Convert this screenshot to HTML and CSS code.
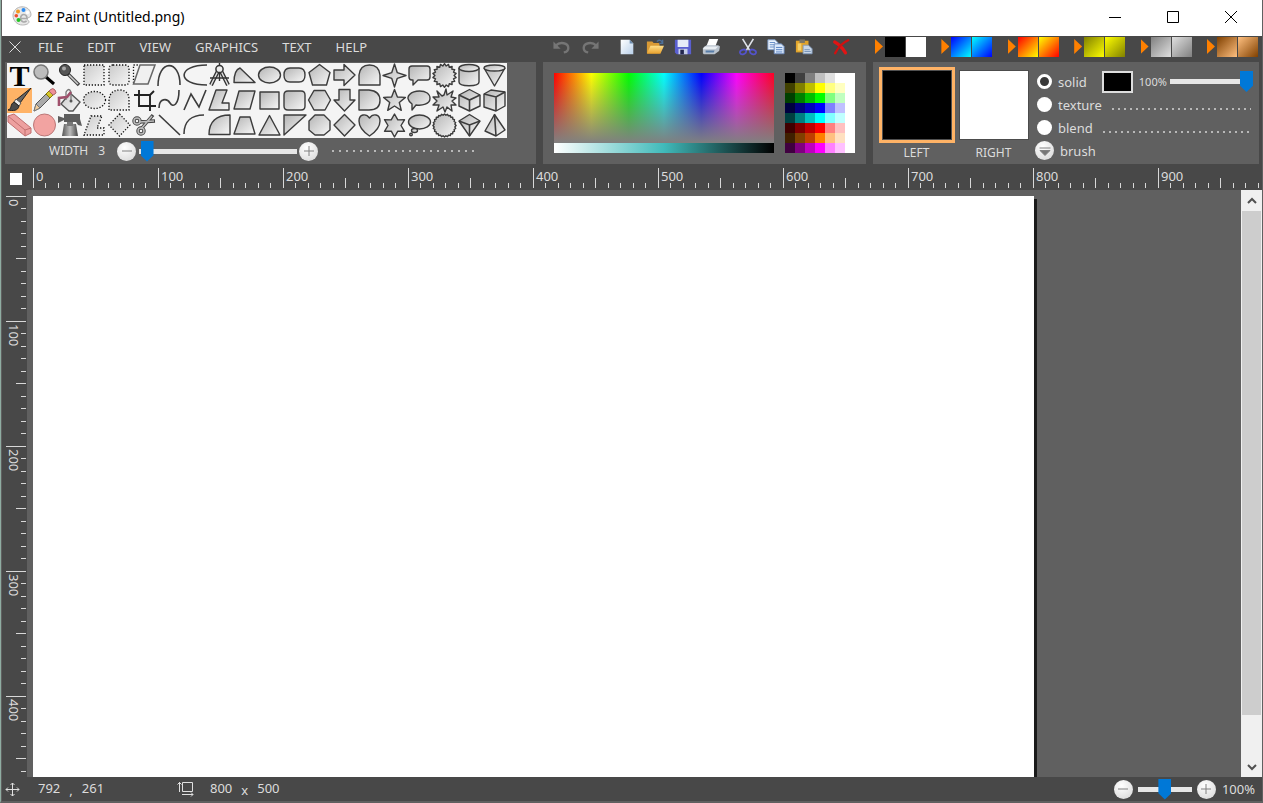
FILE: index.html
```html
<!DOCTYPE html>
<html lang="en">
<head>
<meta charset="utf-8">
<title>EZ Paint (Untitled.png)</title>
<link rel="stylesheet" href="styles.css">
</head>
<body>
<svg class="defs" aria-hidden="true">
  <defs>
    <linearGradient id="shade" x1="0" y1="0" x2="1" y2="1"><stop offset="0" stop-color="#b4b4b4"/><stop offset="1" stop-color="#f8f8f8"/></linearGradient>
    <linearGradient id="pale" x1="0" y1="0" x2="1" y2="1"><stop offset="0" stop-color="#cacaca"/><stop offset="1" stop-color="#f6f6f6"/></linearGradient>
    <linearGradient id="metal" x1="0" y1="0" x2="1" y2="0"><stop offset="0" stop-color="#555"/><stop offset=".5" stop-color="#bbb"/><stop offset="1" stop-color="#444"/></linearGradient>
    <linearGradient id="paper" x1="0" y1="0" x2="1" y2="1"><stop offset="0" stop-color="#fff"/><stop offset="1" stop-color="#b9d0ea"/></linearGradient>
    <linearGradient id="gold" x1="0" y1="0" x2="0" y2="1"><stop offset="0" stop-color="#ffe08a"/><stop offset="1" stop-color="#e8a02c"/></linearGradient>
  </defs>
</svg>
<div class="window">
  <header class="titlebar">
    <svg class="logo" viewBox="0 0 20 20" aria-hidden="true">
      <path d="M10 .8C5 .8 1 4.800 1 9.500c0 5 4 9.500 9.500 9.500 3.500 0 6.500-1.300 6.500-3.200 0-1.700-2-1.300-2-2.800 0-1.800 4-1 4-4C19 4 15 .8 10 .8z" fill="#e8e8e8" stroke="#b5b5b5"/>
      <path d="M9 12.500h6c.4-5-6.400-5.400-6.400-.4 0 3.800 3.800 4.800 6 2.800" fill="none" stroke="#aaa" stroke-width="1.600"/>
      <circle cx="6" cy="5.500" r="2" fill="#f39a1f"/><circle cx="11.500" cy="4" r="2" fill="#2d8cf0"/><circle cx="4.300" cy="9.800" r="1.800" fill="#f0502d"/><circle cx="6.500" cy="14" r="2" fill="#22c322"/><circle cx="15.500" cy="6.500" r="1.700" fill="#fff"/>
    </svg>
    <h1 class="title">EZ Paint (Untitled.png)</h1>
    <div class="caption-buttons">
      <button class="caption" aria-label="Minimize"><svg viewBox="0 0 12 12"><path d="M0 6.500h12"/></svg></button>
      <button class="caption" aria-label="Maximize"><svg viewBox="0 0 12 12"><path d="M.5 .5h11v11H.5z"/></svg></button>
      <button class="caption" aria-label="Close"><svg viewBox="0 0 12 12"><path d="M0 0l12 12M12 0L0 12"/></svg></button>
    </div>
  </header>

  <div class="top columns">
    <nav class="menu">
      <button class="menu-close" aria-label="Close picture"><svg viewBox="0 0 12 12"><path d="M.5 .5l11 11M11.500 .5l-11 11"/></svg></button>
      <button>FILE</button><button>EDIT</button><button>VIEW</button><button>GRAPHICS</button><button>TEXT</button><button>HELP</button>
    </nav>
    <div class="actions">
      <button aria-label="Undo"><svg viewBox="0 0 20 20"><path d="M3 8.500c5-5 14-3 14 2.500 0 3-2.500 4.500-5 5" fill="none" stroke="#757575" stroke-width="2.600"/><path d="M.5 4v8h8z" fill="#757575"/></svg></button>
      <button aria-label="Redo"><svg viewBox="0 0 20 20"><path d="M17 8.500c-5-5-14-3-14 2.500 0 3 2.500 4.500 5 5" fill="none" stroke="#757575" stroke-width="2.600"/><path d="M19.500 4v8h-8z" fill="#757575"/></svg></button>
      <button class="group-start" aria-label="New"><svg viewBox="0 0 20 20"><path d="M3 2h10l4 4v12H3z" fill="url(#paper)"/><path d="M13 2v4h4z" fill="#6d8db0"/></svg></button>
      <button aria-label="Open"><svg viewBox="0 0 20 20"><path d="M1 4h6l1.500 1.500H15V17H1z" fill="#d99a35"/><path d="M5 8.500h15l-4 9H1z" fill="url(#gold)"/><path d="M12 4c3-2.500 5-1.500 6 1M18.500 2v4h-4" fill="none" stroke="#4d6f99" stroke-width="1.500"/></svg></button>
      <button aria-label="Save"><svg viewBox="0 0 20 20"><path d="M1 2h18v16H3l-2-2z" fill="#5a5fd0"/><path d="M4 2h12v8H4z" fill="#e6ebf8"/><path d="M5 12h10v6H5z" fill="#c6cee8"/><path d="M7 13h4v5H7z" fill="#22264f"/></svg></button>
      <button aria-label="Print"><svg viewBox="0 0 20 20"><path d="M8 1h10l-3 8H5z" fill="#fff"/><path d="M5 8h13l2 1.500-1 5-5 3.500H2l-1-1 0-6z" fill="#b9c2cc"/><path d="M3 9.500h15l-3 3H1z" fill="#e9eef3"/><path d="M4 14h10l-1 2H4z" fill="#587da8"/></svg></button>
      <button class="group-start" aria-label="Cut"><svg viewBox="0 0 20 20"><path d="M4 1l8 13M16 1L8 14" stroke="#dfe3ea" stroke-width="1.800"/><ellipse cx="4.500" cy="15.500" rx="3.500" ry="2.500" fill="none" stroke="#5353c9" stroke-width="2" transform="rotate(-20 4.500 15.500)"/><ellipse cx="15.500" cy="15.500" rx="3.500" ry="2.500" fill="none" stroke="#5353c9" stroke-width="2" transform="rotate(20 15.500 15.500)"/></svg></button>
      <button aria-label="Copy"><svg viewBox="0 0 20 20"><path d="M1 2h8l3 3v8H1z" fill="#eaf2fc" stroke="#7e9dc9"/><path d="M3 5h6M3 7.500h6M3 10h5" stroke="#5c87c4"/><path d="M8 6.500h8l3 3v8H8z" fill="#dce9fa" stroke="#6687bb"/><path d="M10 10.500h7M10 13h7M10 15.500h7" stroke="#4c7abf"/></svg></button>
      <button aria-label="Paste"><svg viewBox="0 0 20 20"><path d="M1 3h14v13H1z" fill="#e2a42b"/><path d="M5 1.500h6v4H5z" fill="#7a7568"/><path d="M3 6h4v8H3z" fill="#f7cf67"/><path d="M9 8h6l4 4v5.500H9z" fill="#c9d6e6" stroke="#7f99ba"/><path d="M10.500 13h6M10.500 15h7" stroke="#7290b5"/></svg></button>
      <button class="group-start" aria-label="Delete"><svg viewBox="0 0 20 20"><path d="M3 4.500c4 2 9 7 12 12" fill="none" stroke="#e11414" stroke-width="3.600" stroke-linecap="round"/><path d="M18 2.500C12 5 7 10 3.500 17" fill="none" stroke="#d01010" stroke-width="2.600" stroke-linecap="round"/></svg></button>
    </div>
    <div class="presets" id="presets"></div>
  </div>

  <main class="panels columns">
    <section class="panel tools-panel" aria-label="Tools">
      <div class="tools" id="tools"></div>
      <div class="width-row">
        <label class="caps width-label" for="width">WIDTH</label>
        <output class="caps width-value" for="width">3</output>
        <button class="round" aria-label="Thinner"><svg viewBox="0 0 18 18"><path d="M4 9h10"/></svg></button>
        <input class="slider width-slider" id="width" type="range" min="1" max="100" value="2">
        <button class="round" aria-label="Thicker"><svg viewBox="0 0 18 18"><path d="M4 9h10M9 4v10"/></svg></button>
        <span class="dots dots-wide"></span>
      </div>
    </section>

    <section class="panel color-panel" aria-label="Colors">
      <div class="mixer"><div class="spectrum"></div><div class="tones"></div></div>
      <div class="palette" id="palette"></div>
    </section>

    <section class="panel fill-panel" aria-label="Fill">
      <div class="well-column"><button class="well well-left" id="left" aria-label="Left color"></button><span class="caps">LEFT</span></div>
      <div class="well-column"><button class="well well-right" id="right" aria-label="Right color"></button><span class="caps">RIGHT</span></div>
      <div class="modes">
        <div class="mode">
          <input type="radio" name="mode" id="solid" checked><label for="solid">solid</label>
          <button class="chip" aria-label="Solid color"></button>
          <label class="percent" for="opacity">100%</label>
          <input class="slider opacity-slider" id="opacity" type="range" value="100">
        </div>
        <div class="mode"><input type="radio" name="mode" id="texture"><label for="texture">texture</label><span class="dots"></span></div>
        <div class="mode"><input type="radio" name="mode" id="blend"><label for="blend">blend</label><span class="dots"></span></div>
        <div class="mode"><button class="round brush-button" id="brush"><svg viewBox="0 0 18 18"><path d="M3.500 6h11"/><path d="M4 8.500h10l-5 5z" fill="#777"/></svg></button><label for="brush">brush</label></div>
      </div>
    </section>
  </main>

  <div class="ruler-row"><button class="corner" aria-label="Ruler origin"></button><div class="ruler ruler-x" id="ruler-x"></div></div>

  <div class="workspace">
    <div class="ruler ruler-y" id="ruler-y"></div>
    <div class="stage"><canvas class="sheet" width="800" height="500"></canvas></div>
    <div class="scrollbar">
      <button aria-label="Scroll up"><svg viewBox="0 0 10 10"><path d="M1 7l4-4 4 4"/></svg></button>
      <div class="scroll-track"><div class="scroll-thumb"></div></div>
      <button aria-label="Scroll down"><svg viewBox="0 0 10 10"><path d="M1 3l4 4 4-4"/></svg></button>
    </div>
  </div>

  <footer class="status">
    <svg class="status-icon" viewBox="0 0 15 15"><path d="M7.500 1v13M1 7.500h13M5.500 3l2-2 2 2M5.500 12l2 2 2-2M3 5.500l-2 2 2 2M12 5.500l2 2-2 2"/></svg>
    <span class="position"><span>792</span><span class="mark">,</span><span>261</span></span>
    <svg class="status-icon size-icon" viewBox="0 0 17 16"><path d="M5.500 1.500h10v9h-10zM2.500 11V1M.5 3.500l2-2 2 2M5 13.500h11M14 11.500l2 2-2 2"/></svg>
    <span class="size"><span>800</span><span class="mark">x</span><span>500</span></span>
    <div class="zoom">
      <button class="round" aria-label="Zoom out"><svg viewBox="0 0 18 18"><path d="M4 9h10"/></svg></button>
      <input class="slider zoom-slider" id="zoom" type="range" value="50">
      <button class="round" aria-label="Zoom in"><svg viewBox="0 0 18 18"><path d="M4 9h10M9 4v10"/></svg></button>
      <label for="zoom">100%</label>
    </div>
  </footer>
</div>
<script src="app.js"></script>
</body>
</html>
```

FILE: styles.css
```css
* { box-sizing: border-box; }

body {
  margin: 0;
  font-family: "Noto Sans", "Open Sans", sans-serif;
  font-size: 13px;
  color: #dcdcdc;
  background: #484848;
}

button {
  margin: 0;
  padding: 0;
  border: 0;
  background: none;
  color: inherit;
  font: inherit;
}

svg { display: block; }
.defs { position: absolute; width: 0; height: 0; }

.window {
  display: flex;
  flex-direction: column;
  height: 100vh;
  overflow: hidden;
  border: solid #606060;
  border-width: 0 1px 2px 1px;
  border-left-color: #8fada2;
  box-shadow: inset 1px 0 #606060;
  padding-left: 1px;
}

/* Title bar */
.titlebar {
  display: flex;
  align-items: center;
  flex: 0 0 36px;
  padding-left: 10px;
  background: #fff;
  color: #000;
}
.logo { width: 20px; height: 20px; margin-bottom: 4px; }
.title { margin: 0 0 3px 5px; font: 14px "Noto Sans", sans-serif; }
.caption-buttons { display: flex; margin: 0 2px 2px auto; }
.caption { display: grid; place-items: center; width: 58px; height: 34px; }
.caption svg { width: 12px; height: 12px; fill: none; stroke: #000; }

/* Menu, actions and presets */
.columns {
  display: grid;
  grid-template-columns: minmax(0, 531fr) minmax(0, 323fr) minmax(0, 386fr);
  column-gap: 7px;
  padding: 0 3px;
}
.top { flex: 0 0 26px; }
.menu { display: flex; align-items: center; gap: 24px; padding: 0 0 4px 4px; }
.menu-close { margin-right: -7px; }
.menu-close svg { width: 12px; height: 12px; fill: none; stroke: #ddd; }
.actions { display: flex; align-items: center; gap: 8px; padding: 0 0 4px 9px; }
.actions svg { width: 20px; height: 18px; }
.actions .group-start { margin-left: 9px; }
.presets { display: flex; justify-content: space-between; padding: 1px 1px 0 2px; }
.preset { display: flex; gap: 1px; height: 21px; }
.preset::before {
  content: "";
  width: 8px;
  margin: 2px 1px 4px 0;
  background: #ff8000;
  clip-path: polygon(0 0, 100% 50%, 0 100%);
}
.preset span { width: 20px; height: 20px; }

/* Panels */
.panels { flex: 0 0 102px; }
.panel { background: #606060; }

.tools { display: grid; grid-template-columns: repeat(20, 25px); grid-auto-rows: 25px; width: max-content; margin: 1px 0 0 2px; background: #f4f4f4; }
.tool { overflow: hidden; color: #000; }
.tool svg { width: 25px; height: 25px; }
.tool.selected { background: #ffb366; }
.tool-text { font: bold 30px/25px "Liberation Serif", serif; }
.s { fill: url(#shade); stroke: #3c3c3c; stroke-width: 1.4; stroke-linejoin: round; }
.l { fill: none; stroke: #3c3c3c; stroke-width: 1.6; }
.d { fill: url(#pale); stroke: #111; stroke-width: 1.3; stroke-dasharray: 1.3 1.7; }

.width-row { display: flex; align-items: center; height: 26px; padding-left: 44px; }
.caps { font-size: 12px; line-height: 16px; }
.width-value { margin: 0 12px 0 10px; }
.width-slider { width: 158px; margin: 0 2px 0 3px; }

.round {
  display: grid;
  place-items: center;
  flex: none;
  width: 19px;
  height: 19px;
  border-radius: 50%;
  background: radial-gradient(circle at 40% 30%, #fff, #d4d4d4);
}
.round svg { width: 18px; height: 18px; fill: none; stroke: #808080; }

.slider { appearance: none; flex: none; height: 22px; background: none; }
.slider::-webkit-slider-runnable-track { height: 5px; background: #e6e6e6; }
.slider::-webkit-slider-thumb {
  appearance: none;
  width: 13px;
  height: 21px;
  margin-top: -8px;
  background: #0078d7;
  clip-path: polygon(0 0, 100% 0, 100% 70%, 50% 100%, 0 70%);
}

.dots { height: 2px; background: repeating-linear-gradient(90deg, #b8b8b8 0 2px, transparent 2px 6px); }
.dots-wide { width: 147px; margin-left: 14px; background: repeating-linear-gradient(90deg, #b8b8b8 0 2px, transparent 2px 7px); }

.color-panel { display: flex; align-items: flex-start; gap: 11px; padding: 11px; }
.mixer { flex: 1; }
.spectrum {
  height: 70px;
  background:
    linear-gradient(rgba(128, 128, 128, 0), #808080),
    linear-gradient(90deg, #f00, #ff0 17%, #0f0 34%, #0ff 50%, #00f 67%, #f0f 83%, #f02 100%);
}
.tones { height: 10px; background: linear-gradient(90deg, #fff, #40baba 50%, #000); }
.palette { display: grid; grid-template-columns: repeat(7, 10px); grid-auto-rows: 10px; }

.fill-panel { display: flex; padding: 5px 6px 0 5px; }
.well-column { display: flex; flex-direction: column; align-items: center; flex: none; width: 77px; }
.well { width: 76px; height: 76px; margin-bottom: 2px; }
.well-left { border: 3px solid #ffb366; background: #000; box-shadow: inset 0 0 0 1px #505050; }
.well-right { width: 70px; height: 70px; margin: 3px 0 5px; border: 1px solid #4c4c4c; background: #fff; }
.modes { flex: 1; margin-left: 2px; padding-top: 3px; min-width: 0; }
.mode { display: flex; align-items: center; height: 23px; }
.mode > label:not(.percent) { margin-left: 6px; }
.mode input[type="radio"] {
  appearance: none;
  flex: none;
  width: 15px;
  height: 15px;
  margin: 0 0 0 3px;
  border-radius: 50%;
  background: #fff;
}
.mode input[type="radio"]:checked { border: 3px solid #fff; background: #383838; }
.chip { width: 31px; height: 22px; margin-left: 15px; border: 2px solid #ddd; background: #000; }
.percent { margin-left: 6px; font-size: 11px; }
.opacity-slider { flex: 1; min-width: 0; margin: 0 0 0 3px; }
.mode .dots { flex: 1; margin: 8px 2px 0 10px; }
.brush-button { margin-left: 1px; }

/* Rulers */
.ruler { display: flex; overflow: hidden; }
.ruler svg { position: absolute; inset: 0; stroke: #d8d8d8; }
.segment { position: relative; flex: 0 0 125px; }
.ruler-row { display: flex; flex: 0 0 26px; }
.corner { flex: none; width: 12px; height: 12px; margin: 9px 11px 0 8px; background: #fff; }
.ruler-x { flex: 1; }
.ruler-x .segment { padding: 3px 0 0 3px; line-height: 18px; }
.ruler-y { flex-direction: column; flex: 0 0 25px; padding-top: 6px; }
.ruler-y .segment { padding: 3px 0 0 3px; line-height: 18px; writing-mode: vertical-rl; text-orientation: sideways; display: flex; flex-direction: column; justify-content: flex-end; }

/* Workspace */
.workspace { display: flex; flex: 1; min-height: 0; }
.stage { flex: 1; min-width: 0; overflow: hidden; padding: 6px 0 0 6px; background: #606060; }
.sheet { display: block; width: 1001px; background: #fff; box-shadow: 3px 3px 0 #1a1a1a; }
.scrollbar { display: flex; flex-direction: column; flex: 0 0 21px; background: #f0f0f0; }
.scrollbar button { display: grid; place-items: center; height: 21px; }
.scrollbar svg { width: 10px; height: 10px; fill: none; stroke: #505050; stroke-width: 2; }
.scroll-track { flex: 1; padding: 0 1px; }
.scroll-thumb { height: 92.5%; background: #cdcdcd; }

/* Status bar */
.status { display: flex; align-items: center; flex: 0 0 24px; padding: 0 7px 0 3px; }
.status-icon { width: 15px; height: 15px; fill: none; stroke: #e0e0e0; }
.size-icon { width: 17px; height: 16px; }
.position { display: flex; gap: 9px; width: 139px; margin-left: 18px; }
.size { display: flex; gap: 9px; margin-left: 16px; }
.mark { padding-top: 2px; }
.zoom { display: flex; align-items: center; margin-left: auto; }
.zoom-slider { width: 54px; margin: 0 5px; }
.zoom label { margin-left: 6px; }
```

FILE: app.js
```js
function star(points, outer, inner, start = -90, cx = 12.5, cy = 12.5) {
  const list = [];
  for (let i = 0; i < points * 2; i++) {
    const r = i % 2 ? inner : outer;
    const a = (start + i * 180 / points) * Math.PI / 180;
    list.push((cx + r * Math.cos(a)).toFixed(1) + "," + (cy + r * Math.sin(a)).toFixed(1));
  }
  return list.join(" ");
}
const s = d => `<path class="s" d="${d}"/>`;
const l = d => `<path class="l" d="${d}"/>`;
const dash = d => `<path class="d" d="${d}"/>`;
const poly = p => `<polygon class="s" points="${p}"/>`;

const tools = [
  ["Text", null],
  ["Magnifier", `<path d="M14 14l8 7" stroke="#000" stroke-width="3"/><circle cx="9" cy="9" r="7" fill="#bdbdbd" stroke="#777" stroke-width="1.500"/>`],
  ["Color picker", `<path d="M11 11l11 11" stroke="#444" stroke-width="3.600"/><path d="M12 12l9 9" stroke="#ccc" stroke-width="1.500"/><circle cx="8" cy="7" r="5.500" fill="#555" stroke="#222"/><circle cx="7" cy="5.500" r="2" fill="#aaa"/>`],
  ["Select rectangle", dash("M2 2h20v20H2z")],
  ["Select rounded", dash("M6 2h12q4 0 4 4v12q0 4-4 4H6q-4 0-4-4V6q0-4 4-4z")],
  ["Select freeform", `<path class="d" style="fill:none" d="M1.500 20V2H7"/><path d="M8 2h15l-7 19H1.500z" fill="#f0f0f0" stroke="#666" stroke-width="1.500"/>`],
  ["Arch curve", l("M1 23C1-4 23-4 23 22")],
  ["Side curve", l("M25 2C-5 2-6 22 25 22")],
  ["Compass", `<path d="M11 8L4 22M14 8l7 14" stroke="#333" stroke-width="4"/><path d="M11 8L4 22M14 8l7 14" stroke="#ddd" stroke-width="1.500"/><path d="M3 15h19M12.500 0v18" stroke="#333" stroke-width="1.400"/><circle cx="12.500" cy="6" r="3.600" fill="#eee" stroke="#333" stroke-width="1.500"/>`],
  ["Curved shape", s("M2 19.500Q2 7 8 5l15 14.500z")],
  ["Ellipse", `<ellipse class="s" cx="12.500" cy="12" rx="11" ry="8"/>`],
  ["Pill", s("M8 5h9q6 0 6 7t-6 7H8q-6 0-6-7t6-7z")],
  ["Pentagon", s("M12.500 1.500L23 9.500 19.500 22h-14L2 9.500z")],
  ["Arrow right", s("M2 7h10V1.500L23 12 12 22.500V17H2z")],
  ["Arch", s("M2 22V12Q3 2 12.500 2T23 12v10z")],
  ["Four point star", poly(star(4, 11.5, 4))],
  ["Rounded callout", s("M5 3h15q3 0 3 3v8q0 3-3 3h-9l-5 5V17H5q-3 0-3-3V6q0-3 3-3z")],
  ["Seal", poly(star(18, 11.8, 9.6))],
  ["Cylinder", s("M2 5v14c0 5 20 5 20 0V5") + `<ellipse class="s" cx="12" cy="5" rx="10" ry="3.500"/>`],
  ["Cone", s("M2 5l10.500 18L23 5") + `<ellipse class="s" cx="12.500" cy="5" rx="10.500" ry="3"/>`],

  ["Brush", `<path d="M24 0L13 15l-4-3z" fill="#666" stroke="#222"/><path d="M9 11l5 4-2 3-5-4z" fill="#eee" stroke="#555"/><path d="M7 14l5 4c-1 5-6 5-11 4 4-1 2-6 6-8z" fill="#4a4a4a" stroke="#222"/>`],
  ["Pencil", `<path d="M4 16L17 3l4 4L8 20l-6 3z" fill="#aaa" stroke="#555"/><path d="M4 16l4 4-6 3z" fill="#f3cf9e" stroke="#777"/><path d="M17 3l4 4-3 3-4-4z" fill="#d4c72d" stroke="#887700"/><path d="M18 2q3-3 5 0t0 4l-2 1-4-4z" fill="#ee9098" stroke="#a66"/>`],
  ["Fill", `<path d="M13 5l10 9-7 9-4 0-8-7z" fill="url(#pale)" stroke="#555" stroke-width="1.400"/><path d="M9 12V4q3-5 5 0v9" fill="none" stroke="#777" stroke-width="1.300"/><path d="M2 18v-8l8-1 4-5" fill="none" stroke="#a0506c" stroke-width="2.600"/><circle cx="14" cy="13" r="1.500" fill="#555"/>`],
  ["Select ellipse", `<ellipse class="d" cx="12.500" cy="12" rx="11" ry="8.500"/>`],
  ["Select arch", dash("M2 22V12Q3 2 12.500 2T22 12v10z")],
  ["Crop", `<path d="M7 2v16h17M2 7h16v16M18 7l4-4" fill="none" stroke="#222" stroke-width="1.900"/>`],
  ["Curve", l("M2 20c0-10 8-10 11-5s9 2 9-13")],
  ["Zigzag", l("M2 22L9 6l8 13 7-17")],
  ["Polygon", s("M9 2h11l-5 13h7v7H2z")],
  ["Parallelogram", s("M7 3h16l-5 18H2z")],
  ["Rectangle", s("M3 4h19v17H3z")],
  ["Rounded rectangle", s("M6 3h13q4 0 4 4v11q0 4-4 4H6q-4 0-4-4V7q0-4 4-4z")],
  ["Hexagon", s("M7 2.500h11l5.500 9.500L18 22H7L1.500 12z")],
  ["Arrow down", s("M7 1.500h11V12h5L12.500 23 2 12h5z")],
  ["Half round", s("M2 2h10q11 1 11 10.500T12 22H2z")],
  ["Five point star", poly(star(5, 11.5, 5, -90, 12.5, 13))],
  ["Oval callout", `<path class="s" d="M9 17l-4 5v-6C-5 8 6 3 12.500 3 19 3 23 6 23 10.500 23 16 15 18 9 17z"/>`],
  ["Burst", poly("12,7 14,1 15,7 21,3 19,9 24,10 20,13 24,17 19,17 20,23 15,19 13,24 11,19 5,23 7,17 1,17 5,13 1,9 7,9 5,3 10,8")],
  ["Cube", s("M12.500 1.500L23 7v11l-10.500 5L2 18V7z") + l("M2 7l10.500 5L23 7M12.500 12v11")],
  ["Box", s("M2 6l7-4 14 2v14l-9 5-12-4z") + l("M2 6l12 3 9-5M14 9v14")],

  ["Eraser", `<path d="M1 3l6-2 17 14v5l-6 3L1 9z" fill="#eda09f" stroke="#c26f6f"/><path d="M1 3l17 14 6-2M18 17v6" fill="none" stroke="#c26f6f"/>`],
  ["Round eraser", `<circle cx="12.500" cy="12" r="11" fill="#f2a3a1" stroke="#b77"/>`],
  ["Spray", `<path d="M7 11h12l2 12H5z" fill="url(#metal)"/><path d="M1 3l6 2V1h16v5l2 7-4-1-2-3H7V7l-6 3z" fill="#5d5d5d"/><path d="M10 9h6v4h-6z" fill="#777"/>`],
  ["Select polygon", dash("M9 3h11l-5 12h7v7H2z")],
  ["Select diamond", dash("M12.500 1L23 12 12.500 23 2 12z")],
  ["Scissors", `<g fill="none" stroke="#444" stroke-width="3.400"><path d="M7 9l16-1M9 16L21 2"/><circle cx="5" cy="8" r="3"/><circle cx="9" cy="18" r="3"/></g><g fill="none" stroke="#bbb" stroke-width="1.500"><path d="M7 9l15-1M9 16L20 3"/><circle cx="5" cy="8" r="3"/><circle cx="9" cy="18" r="3"/></g>`],
  ["Line", l("M2 2l21 20")],
  ["Arc", l("M2 21C2 8 10 2 22 2")],
  ["Quarter circle", s("M2 21.500C2 9 9 2 23 2v19.500z")],
  ["Trapezoid", s("M8 4h10l5 17H2z")],
  ["Triangle", s("M12.500 2.500L23 22H2z")],
  ["Right triangle", s("M2 2h22L2 22z")],
  ["Octagon", s("M8 2h9l6 6v9l-6 5H8l-6-5V8z")],
  ["Diamond", s("M12.500 1.500L23 12 12.500 23 2 12z")],
  ["Heart", s("M12.500 5C16 0 23 1 23 8q0 8-10.500 15Q2 16 2 8C2 1 9 0 12.500 5z")],
  ["Six point star", poly(star(6, 11.5, 6.5))],
  ["Thought", `<ellipse class="s" cx="12.500" cy="9" rx="11" ry="7"/><ellipse class="s" cx="7.500" cy="17.500" rx="3" ry="2"/><circle class="s" cx="4" cy="21.500" r="1.300"/>`],
  ["Wavy seal", poly(star(24, 11.6, 10.4))],
  ["Inverted pyramid", s("M12.500 1.500L23 8 12.500 23 2 8z") + l("M2 8l10.500 4L23 8M12.500 12v11")],
  ["Pyramid", s("M12.500 1.500L23 17l-9 6-11-5z") + l("M12.500 1.500L14 23")]
];

document.getElementById("tools").innerHTML = tools.map(([name, art]) =>
  `<button class="tool${name === "Brush" ? " selected" : ""}${art ? "" : " tool-text"}" aria-label="${name}">${art ? `<svg viewBox="0 0 25 25">${art}</svg>` : "T"}</button>`
).join("");

const presets = [["#000", "#000"], ["#00f", "#0ff"], ["#f00", "#ff0"], ["#808000", "#ff0"], ["#808080", "#e0e0e0"], ["#804000", "#ffc080"]];
document.getElementById("presets").innerHTML = presets.map(([a, b], i) =>
  `<button class="preset" aria-label="Color pair ${i + 1}"><span style="background:linear-gradient(135deg,${a},${b})"></span><span style="background:${i ? `linear-gradient(135deg,${b},${a})` : "#fff"}"></span></button>`
).join("");

const palette = [
  "#000 #404040 #808080 #c0c0c0 #e0e0e0 #fff #fff",
  "#404000 #808000 #c0c000 #ff0 #ffff80 #ffffc0 #fff",
  "#004000 #008000 #00c000 #0f0 #80ff80 #c0ffc0 #fff",
  "#000040 #000080 #0000c0 #00f #8080ff #c0c0ff #fff",
  "#004040 #008080 #00c0c0 #0ff #80ffff #c0ffff #fff",
  "#400000 #800000 #c00000 #f00 #ff8080 #ffc0c0 #fff",
  "#402000 #804000 #c04000 #ff8000 #ffc080 #ffe0c0 #fff",
  "#400040 #800080 #c000c0 #f0f #ff80ff #ffc0ff #fff"
];
document.getElementById("palette").innerHTML = palette.join(" ").split(" ").map(c =>
  `<button style="background:${c}" aria-label="${c}"></button>`
).join("");

function ruler(id, count, vertical) {
  let ticks = "";
  for (let i = 0; i < 10; i++) {
    const p = Math.floor(i * 12.5) + 0.5;
    const len = i === 0 ? 20 : i === 5 ? 10 : 5;
    ticks += vertical ? `M${24 - len} ${p}h${len}` : `M${p} ${24 - len}v${len}`;
  }
  const size = vertical ? 'width="25" height="125"' : 'width="125" height="26"';
  let html = "";
  for (let n = 0; n < count; n++) {
    html += `<div class="segment"><svg ${size}><path d="${ticks}"/></svg><span>${n * 100}</span></div>`;
  }
  document.getElementById(id).innerHTML = html;
}
ruler("ruler-x", 16, false);
ruler("ruler-y", 8, true);
```
